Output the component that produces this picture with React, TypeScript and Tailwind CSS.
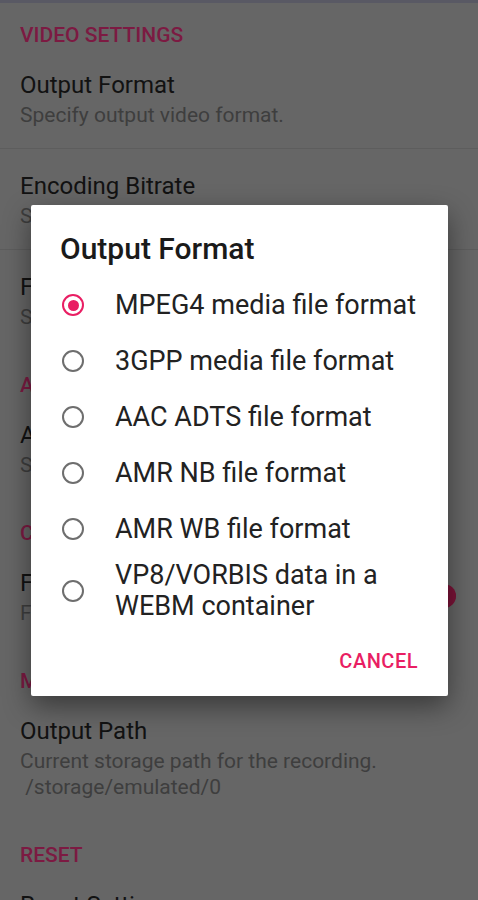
import React from "react"

const font = { fontFamily: "Roboto, 'Noto Sans', 'Liberation Sans', sans-serif" }

type Pref = { title: string; summary?: string[]; divider?: boolean; toggle?: boolean }

const sections: { header: string; items: Pref[] }[] = [
  {
    header: "VIDEO SETTINGS",
    items: [
      { title: "Output Format", summary: ["Specify output video format."], divider: true },
      { title: "Encoding Bitrate", summary: ["Specify video encoding bitrate."], divider: true },
      { title: "Frame Rate", summary: ["Specify video frame rate."] },
    ],
  },
  {
    header: "AUDIO SETTINGS",
    items: [{ title: "Audio Source", summary: ["Specify audio source."] }],
  },
  {
    header: "CONTROLS",
    items: [{ title: "Floating Controls", summary: ["Floating controls while recording."], toggle: true }],
  },
  {
    header: "MISC",
    items: [
      {
        title: "Output Path",
        summary: ["Current storage path for the recording.", "\u00a0/storage/emulated/0"],
      },
    ],
  },
  {
    header: "RESET",
    items: [{ title: "Reset Settings", summary: ["Restore default settings."] }],
  },
]

const options = [
  ["MPEG4 media file format"],
  ["3GPP media file format"],
  ["AAC ADTS file format"],
  ["AMR NB file format"],
  ["AMR WB file format"],
  ["VP8/VORBIS data in a", "WEBM container"],
]

function Category({ label, first }: { label: string; first?: boolean }) {
  return (
    <div
      className={`${first ? "pt-[21px]" : "pt-[24px]"} pb-[2px] pl-[20px] text-[21px] leading-[22px] font-medium text-[#7c1a42]`}
    >
      {label}
    </div>
  )
}

function PrefRow({ item }: { item: Pref }) {
  return (
    <div className={`flex items-center pl-[20px] pr-[22px] ${item.divider ? "border-b border-[#5d5d5d]" : ""}`}>
      <div className="flex-1 pt-[24px] pb-[20px]">
        <div className="text-[24px] leading-[26px] text-[#121212]">{item.title}</div>
        <div className="mt-[4px] text-[21px] leading-[26px] text-[#3e3e3e]">
          {item.summary?.map((s) => (
            <div key={s}>{s}</div>
          ))}
        </div>
      </div>
      {item.toggle && (
        <div className="relative w-[48px] h-[24px] flex items-center">
          <div className="w-full h-[14px] rounded-full bg-[#5e2a3c]" />
          <div className="absolute right-0 w-[24px] h-[24px] rounded-full bg-[#7c1338]" />
        </div>
      )}
    </div>
  )
}

function Radio({ checked }: { checked?: boolean }) {
  return (
    <div
      className={`shrink-0 w-[22px] h-[22px] rounded-full border-[2px] flex items-center justify-center ${
        checked ? "border-[#e91e63]" : "border-[#6e6e6e]"
      }`}
    >
      {checked && <div className="w-[11px] h-[11px] rounded-full bg-[#e91e63]" />}
    </div>
  )
}

export default function App() {
  return (
    <div className="relative w-[478px] h-[900px] overflow-hidden bg-[#666666]" style={font}>
      <div className="h-[3px] bg-[#595964]" />
      {sections.map((sec, i) => (
        <div key={sec.header}>
          <Category label={sec.header} first={i === 0} />
          {sec.items.map((it) => (
            <PrefRow key={it.title} item={it} />
          ))}
        </div>
      ))}

      {/* dialog */}
      <div className="absolute left-[31px] top-[205px] w-[417px] bg-white rounded-[2px] shadow-[0_10px_28px_rgba(0,0,0,0.45)]">
        <div className="pt-[28px] pl-[29px] text-[30px] leading-[32px] font-medium text-[#1a1a1a]">
          Output Format
        </div>
        <div className="mt-[12px]">
          {options.map((lines, i) => (
            <div
              key={lines[0]}
              className={`flex items-center pl-[31px] pr-[20px] ${lines.length > 1 ? "py-[3px]" : "h-[56px]"}`}
            >
              <Radio checked={i === 0} />
              <div className="ml-[31px] text-[27px] leading-[31px] text-[#222222]">
                {lines.map((l) => (
                  <div key={l}>{l}</div>
                ))}
              </div>
            </div>
          ))}
        </div>
        <div className="flex justify-end pt-[12px] pb-[11px] pr-[30px]">
          <div className="h-[48px] flex items-center text-[20px] font-medium tracking-[0.5px] text-[#e91e63]">
            CANCEL
          </div>
        </div>
      </div>
    </div>
  )
}
